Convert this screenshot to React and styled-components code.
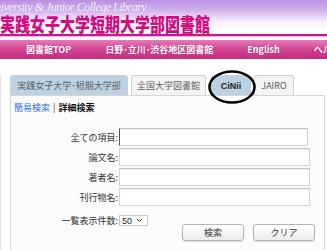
import styled, { createGlobalStyle } from "styled-components";

const GlobalStyle = createGlobalStyle`
  body {
    margin: 0;
    background: #fff;
    font-family: "Noto Sans CJK JP", "Liberation Sans", sans-serif;
    overflow: hidden;
  }
`;

export default function App() {
  return (
    <Page>
      <GlobalStyle />
      <Header>
        <Script>University &amp; Junior College Library</Script>
        <Title>実践女子大学短期大学部図書館</Title>
      </Header>
      <NavBar>
        <NavItem>図書館TOP</NavItem>
        <NavItem>日野･立川･渋谷地区図書館</NavItem>
        <NavItem>English</NavItem>
        <NavItem>ヘルプ</NavItem>
      </NavBar>
      <Main>
        <Tabs>
          <Tab $active $width={118}>実践女子大学･短期大学部</Tab>
          <Tab $width={75}>全国大学図書館</Tab>
          <Tab $active $strong $width={40}>CiNii</Tab>
          <Tab $width={40}>JAIRO</Tab>
          <Circle viewBox="0 0 50 36">
            <ellipse cx="25" cy="18" rx="22.5" ry="15.5" fill="none" stroke="#000" strokeWidth="2.6" />
          </Circle>
        </Tabs>
        <Panel>
          <Modes>
            <ModeLink>簡易検索</ModeLink>
            <Sep>|</Sep>
            <ModeCurrent>詳細検索</ModeCurrent>
          </Modes>
          <Form>
            <Label>全ての項目:</Label>
            <Field $focused />
            <Label>論文名:</Label>
            <Field />
            <Label>著者名:</Label>
            <Field />
            <Label>刊行物名:</Label>
            <Field />
            <Label $tail>一覧表示件数:</Label>
            <FakeSelect>
              50
              <svg width="7" height="5" viewBox="0 0 7 5">
                <path d="M1 1 L3.5 3.5 L6 1" fill="none" stroke="#333" strokeWidth="1" />
              </svg>
            </FakeSelect>
          </Form>
          <Buttons>
            <Button>検索</Button>
            <Button>クリア</Button>
          </Buttons>
        </Panel>
      </Main>
    </Page>
  );
}

const Page = styled.div`
  width: 327px;
  height: 250px;
  overflow: hidden;
`;

const Header = styled.div`
  height: 34px;
  background: linear-gradient(to bottom, #bb8fe2 0%, #d0b2ee 30%, #f3ecfb 62%, #ffffff 88%);
  border-bottom: 2px solid #d3138b;
  box-shadow: 0 1px 0 #f3b8da;
  overflow: hidden;
`;

const Script = styled.div`
  margin-left: -13px;
  padding-top: 2px;
  height: 11px;
  font-family: "Liberation Serif", serif;
  font-style: italic;
  font-size: 12px;
  line-height: 11px;
  letter-spacing: -0.5px;
  color: #fff;
  white-space: nowrap;
  text-shadow: 0 0 1px #9b6cc9;
`;

const Title = styled.div`
  margin-top: 2px;
  font-family: "Noto Sans CJK JP", sans-serif;
  font-weight: 900;
  font-size: 15px;
  line-height: 14px;
  color: #d40a82;
  white-space: nowrap;
  transform: scaleY(1.3);
  transform-origin: top left;
  text-shadow: 0 0 1px #fff;
`;

const NavBar = styled.div`
  margin-top: 4px;
  height: 19px;
  display: flex;
  align-items: center;
  gap: 34px;
  padding-left: 26px;
  background: linear-gradient(to bottom, #e57bb8, #cf3f8f 55%, #c42f83);
  white-space: nowrap;
  overflow: hidden;
`;

const NavItem = styled.span`
  font-family: "Noto Sans CJK JP", "Liberation Sans", sans-serif;
  font-weight: 700;
  font-size: 9px;
  color: #fff;
  text-shadow: 0 0 1px #a02068;
`;

const Main = styled.div`
  margin-top: 16px;
  padding-left: 10px;
  border-left: 1px solid #e4e4e4;
`;

const Tabs = styled.div`
  position: relative;
  display: flex;
  height: 20px;
  gap: 3px;
  margin-left: -1px;
`;

const Tab = styled.div`
  width: ${(p) => p.$width}px;
  box-sizing: border-box;
  display: flex;
  align-items: center;
  justify-content: center;
  border: 1px solid #cfcfcf;
  border-bottom: none;
  border-radius: 3px 3px 0 0;
  background: ${(p) => (p.$active ? "#bcd1e3" : "#f4f4f4")};
  font-family: ${(p) => (p.$strong ? '"Liberation Sans", sans-serif' : '"Noto Sans CJK JP", sans-serif')};
  font-weight: ${(p) => (p.$strong ? 700 : 400)};
  font-size: 9px;
  color: ${(p) => (p.$strong ? "#222" : "#5e5e5e")};
  white-space: nowrap;
  &:nth-child(3) {
    margin-left: 2px;
  }
`;

const Circle = styled.svg`
  position: absolute;
  left: 197px;
  top: -6px;
  width: 50px;
  height: 36px;
`;

const Panel = styled.div`
  margin-left: -1px;
  margin-right: 2px;
  height: 160px;
  border: 1px solid #d6d6d6;
  border-bottom: none;
  background: #fcfcfc;
  padding: 6px 0 0 3px;
`;

const Modes = styled.div`
  display: flex;
  align-items: center;
  gap: 3px;
  font-size: 9px;
  line-height: 12px;
`;

const ModeLink = styled.span`
  color: #2e6fd8;
`;

const Sep = styled.span`
  color: #333;
`;

const ModeCurrent = styled.span`
  color: #111;
  font-weight: 700;
`;

const Form = styled.div`
  margin-top: 14px;
  display: grid;
  grid-template-columns: 105px 191px;
  row-gap: 2px;
  align-items: center;
`;

const Label = styled.span`
  margin-top: ${(p) => (p.$tail ? "7px" : "0")};
  text-align: right;
  font-size: 9px;
  line-height: 11px;
  color: #333;
  white-space: nowrap;
  padding-right: 1px;
`;

const Field = styled.div`
  height: 18px;
  box-sizing: border-box;
  background: #fff;
  border: 1px solid #d4d4d4;
  border-top-color: #c4c4c4;
  border-left-color: ${(p) => (p.$focused ? "#555" : "#d4d4d4")};
  box-shadow: inset 0 1px 1px #eee;
  margin-right: ${(p) => (p.$focused ? "2px" : "0")};
`;

const FakeSelect = styled.div`
  margin-top: 7px;
  width: 29px;
  height: 11px;
  box-sizing: border-box;
  display: flex;
  align-items: center;
  gap: 4px;
  padding-left: 2px;
  background: #fff;
  border: 1px solid #c8c8c8;
  font-family: "Liberation Sans", sans-serif;
  font-size: 9px;
  color: #222;
`;

const Buttons = styled.div`
  display: flex;
  justify-content: flex-end;
  gap: 9px;
  margin-top: -2px;
  padding-right: 9px;
`;

const Button = styled.div`
  width: 62px;
  height: 17px;
  box-sizing: border-box;
  display: flex;
  align-items: center;
  justify-content: center;
  border: 1px solid #b4b4b4;
  border-radius: 3px;
  background: linear-gradient(to bottom, #ffffff, #ececec);
  box-shadow: 0 1px 1px #ddd;
  font-size: 9px;
  color: #333;
`;
